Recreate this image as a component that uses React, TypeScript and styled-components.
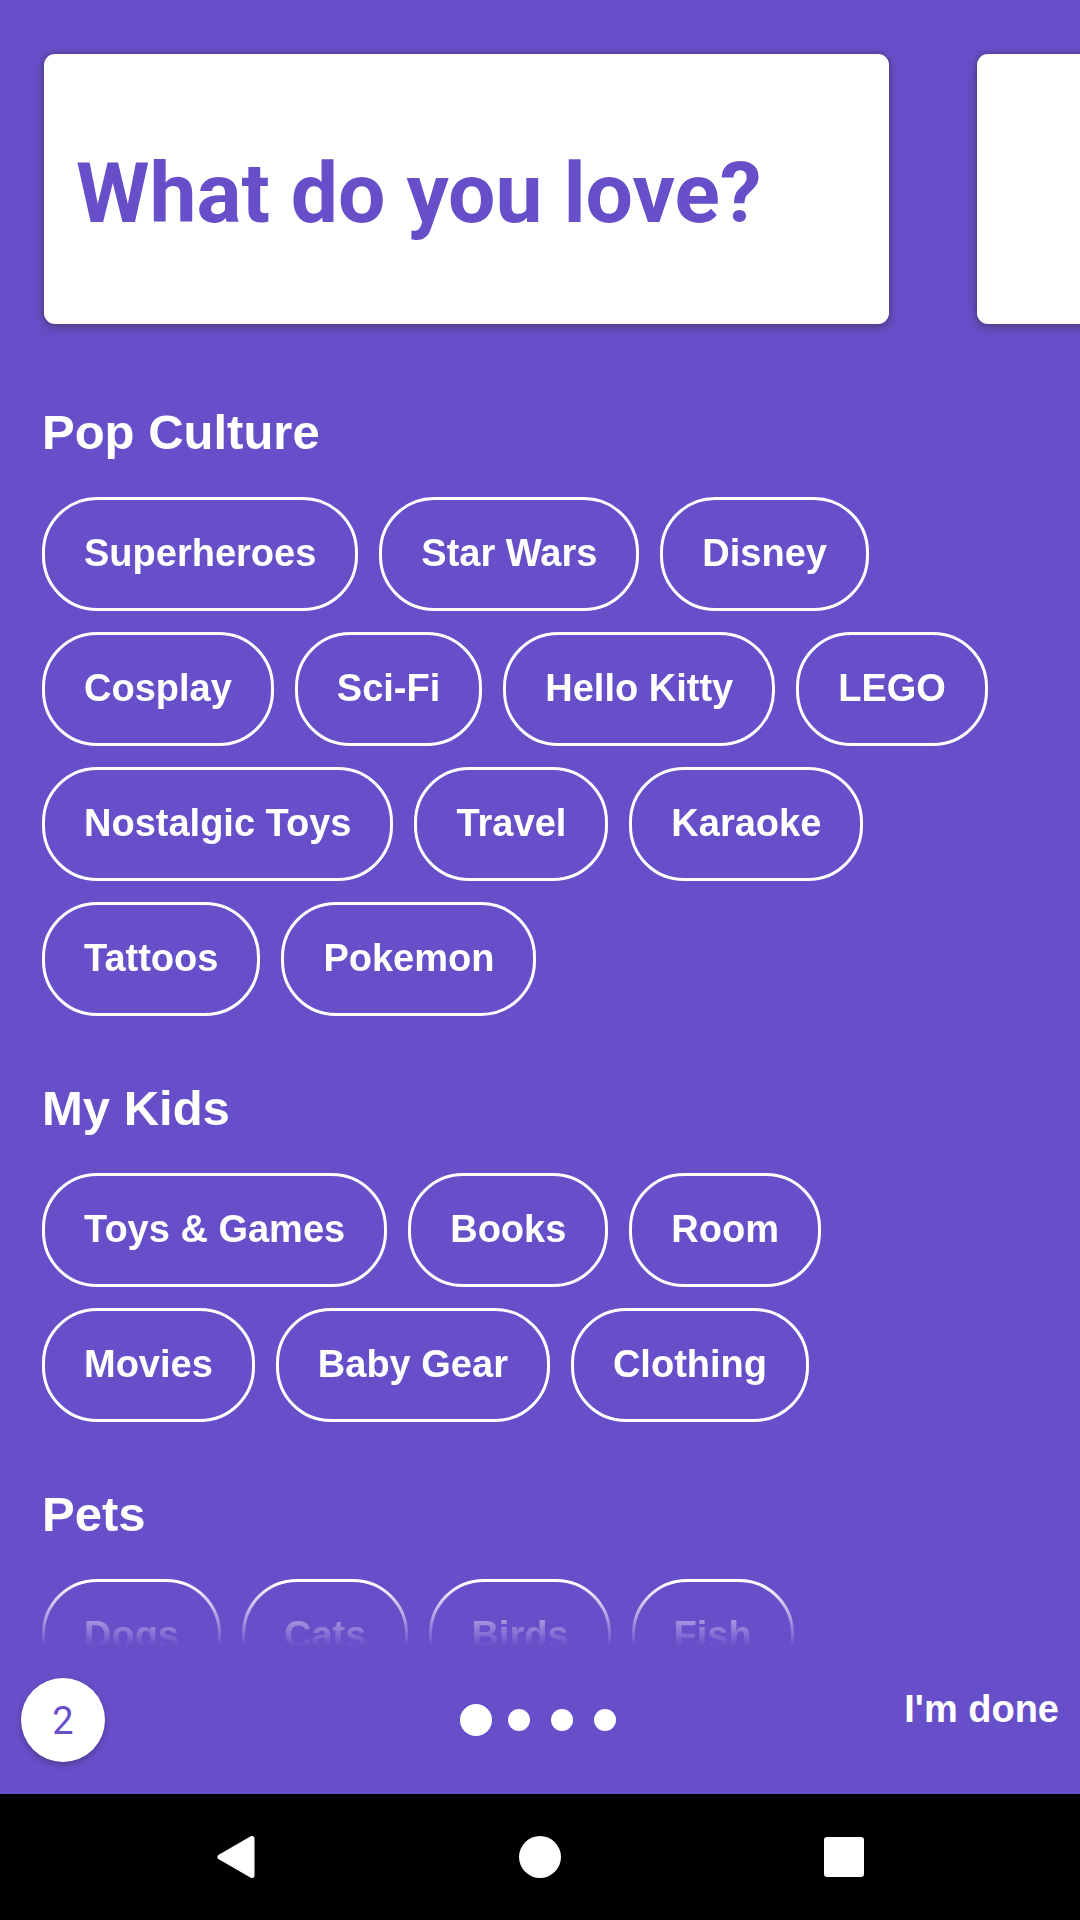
import React, { useState } from "react";
import styled, { createGlobalStyle } from "styled-components";

const purple = "#684fca";
const sans = `"Liberation Sans", Arial, sans-serif`;
const roboto = `Roboto, "Liberation Sans", sans-serif`;

const GlobalStyle = createGlobalStyle`
  *, *::before, *::after { box-sizing: border-box; }
  body { margin: 0; background: ${purple}; }
  button { margin: 0; padding: 0; border: 0; background: none; color: inherit; font: inherit; cursor: pointer; }
`;

const Screen = styled.div`
  display: flex;
  flex-direction: column;
  height: 100vh;
  background: ${purple};
  color: #fff;
  font-family: ${sans};
`;

const Carousel = styled.header`
  display: flex;
  flex: none;
  gap: 88px;
  padding: 54px 44px 30px;
  overflow: hidden;
`;

const Card = styled.div`
  display: flex;
  flex: 0 0 calc(100% - 147px);
  align-items: center;
  min-height: 270px;
  padding: 10px 32px 0;
  border-radius: 11px;
  background: #fff;
  box-shadow: 0 3px 12px rgba(60, 50, 80, 0.55), 0 0 4px rgba(60, 50, 80, 0.5);
`;

const Title = styled.h1`
  margin: 0;
  color: ${purple};
  font: 700 84px/98px ${roboto};
`;

const Interests = styled.main`
  display: flex;
  flex: 1 1 0;
  flex-direction: column;
  gap: 62px;
  min-height: 0;
  padding: 48px 42px 0;
  overflow: hidden;
  mask-image: linear-gradient(to top, transparent, #000 63px);
`;

const Section = styled.section`
  display: flex;
  flex: none;
  flex-direction: column;
  gap: 35px;
`;

const SectionTitle = styled.h2`
  margin: 0;
  font-size: 49px;
  font-weight: 700;
  line-height: 60px;
`;

const Chips = styled.div`
  display: flex;
  flex-wrap: wrap;
  gap: 21px;
`;

const Chip = styled.button`
  height: 114px;
  padding: 0 39px 3px;
  border: 3px solid #fff;
  border-radius: 55px;
  font-size: 38px;
  font-weight: 700;
  line-height: 48px;
  white-space: nowrap;
`;

const Footer = styled.footer`
  display: grid;
  flex: none;
  grid-template-columns: 1fr auto 1fr;
  align-items: center;
  height: 148px;
  padding: 0 21px;
`;

const Count = styled.button`
  width: 84px;
  height: 84px;
  padding-top: 2px;
  border-radius: 50%;
  background: #fff;
  color: ${purple};
  font: 400 38px/82px ${roboto};
  box-shadow: 0 3px 6px rgba(50, 40, 80, 0.45);
`;

const Pager = styled.nav`
  display: flex;
`;

const Dot = styled.button<{ $active: boolean }>`
  display: grid;
  place-items: center;
  width: 43px;
  height: 43px;

  &::before {
    content: "";
    width: ${(p) => (p.$active ? 32 : 22)}px;
    height: ${(p) => (p.$active ? 32 : 22)}px;
    border-radius: 50%;
    background: #fff;
  }
`;

const Done = styled.button`
  justify-self: end;
  padding-bottom: 22px;
  font-size: 38px;
  font-weight: 700;
  line-height: 48px;
`;

const SystemBar = styled.nav`
  display: flex;
  flex: none;
  align-items: center;
  justify-content: center;
  gap: 220px;
  height: 126px;
  background: #000;
`;

const SystemButton = styled.button`
  display: grid;
  place-items: center;
  width: 84px;
  height: 84px;

  svg {
    width: 48px;
    height: 48px;
    fill: #fff;
    stroke: #fff;
    stroke-linejoin: round;
  }
`;

const sections = [
  {
    title: "Pop Culture",
    items: [
      "Superheroes", "Star Wars", "Disney", "Cosplay", "Sci-Fi", "Hello Kitty",
      "LEGO", "Nostalgic Toys", "Travel", "Karaoke", "Tattoos", "Pokemon",
    ],
  },
  {
    title: "My Kids",
    items: ["Toys & Games", "Books", "Room", "Movies", "Baby Gear", "Clothing"],
  },
  { title: "Pets", items: ["Dogs", "Cats", "Birds", "Fish"] },
];

export default function App() {
  const [page, setPage] = useState(0);

  return (
    <>
      <GlobalStyle />
      <Screen>
        <Carousel>
          <Card>
            <Title>What do you love?</Title>
          </Card>
          <Card />
        </Carousel>
        <Interests>
          {sections.map((section) => (
            <Section key={section.title}>
              <SectionTitle>{section.title}</SectionTitle>
              <Chips>
                {section.items.map((item) => (
                  <Chip key={item} type="button">{item}</Chip>
                ))}
              </Chips>
            </Section>
          ))}
        </Interests>
        <Footer>
          <Count type="button">2</Count>
          <Pager aria-label="Pages">
            {[0, 1, 2, 3].map((i) => (
              <Dot
                key={i}
                type="button"
                aria-label={`Page ${i + 1}`}
                $active={i === page}
                onClick={() => setPage(i)}
              />
            ))}
          </Pager>
          <Done type="button">I'm done</Done>
        </Footer>
        <SystemBar aria-label="System">
          <SystemButton type="button" aria-label="Back">
            <svg viewBox="0 0 48 48">
              <path d="M8 24 L40 5.500 V42.500 Z" strokeWidth="5" />
            </svg>
          </SystemButton>
          <SystemButton type="button" aria-label="Home">
            <svg viewBox="0 0 48 48">
              <circle cx="24" cy="24" r="21" stroke="none" />
            </svg>
          </SystemButton>
          <SystemButton type="button" aria-label="Recent apps">
            <svg viewBox="0 0 48 48">
              <rect x="4" y="4" width="40" height="40" rx="3" stroke="none" />
            </svg>
          </SystemButton>
        </SystemBar>
      </Screen>
    </>
  );
}
